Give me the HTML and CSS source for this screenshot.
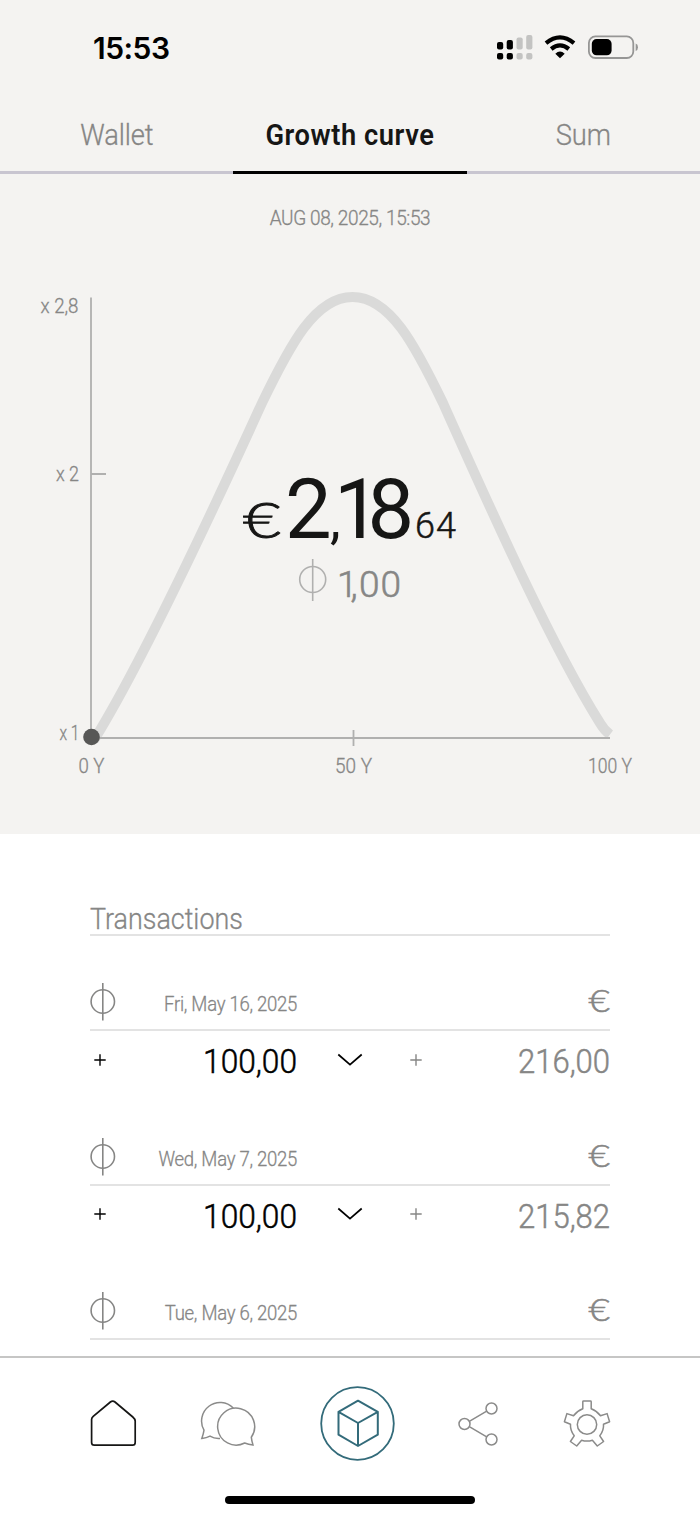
FILE: index.html
```
<!DOCTYPE html>
<html lang="en">
<head>
<meta charset="utf-8">
<title>Growth curve</title>
<link rel="stylesheet" href="styles.css">
</head>
<body>
<svg class="defs" width="0" height="0" aria-hidden="true">
  <symbol id="phi" viewBox="0 0 26 38"><circle cx="12.8" cy="18.5" r="11.7"/><path d="M12.8 0V37.5"/></symbol>
  <symbol id="plus" viewBox="0 0 12 12"><path d="M0.3 6H11.7M6 0.3V11.7"/></symbol>
  <symbol id="chevron" viewBox="0 0 26 14"><path d="M1.3 1.5L13 11.6L24.7 1.5"/></symbol>
</svg>
<div class="app">
  <header class="top">
    <div class="status">
      <span class="time">15:53</span>
      <svg class="status-icons" viewBox="0 0 144 26" width="144" height="26">
        <g fill="#000"><rect x="2" y="7" width="6.200" height="7.500" rx="2"/><rect x="11.700" y="5" width="6.200" height="9.500" rx="2"/><rect x="2" y="18" width="6.200" height="6.500" rx="2"/><rect x="11.700" y="18" width="6.200" height="6.500" rx="2"/></g>
        <g fill="#c3c3c2"><rect x="21.500" y="2.500" width="6.200" height="12" rx="2"/><rect x="31.200" y="0" width="6.200" height="14.500" rx="2"/><rect x="21.500" y="18" width="6.200" height="6.500" rx="2"/><rect x="31.200" y="18" width="6.200" height="6.500" rx="2"/></g>
        <g fill="none" stroke="#000" stroke-width="4.200"><path d="M51 8.100Q65 -3.500 79 8.100"/><path d="M56.200 14Q65 6.800 73.800 14"/></g>
        <path d="M60.300 18.700Q65 14.500 69.700 18.700L65 23.300Z"/>
        <rect x="93.900" y="1.400" width="44.400" height="21.600" rx="6.500" fill="none" stroke="#969695" stroke-width="1.800"/>
        <rect x="96.800" y="4" width="19.800" height="16.300" rx="4.800"/>
        <path d="M140.700 8.500Q143 9.300 143 12.200T140.700 16Z" fill="#969695"/>
      </svg>
    </div>
    <nav class="tabs">
      <a class="tab"><span>Wallet</span></a>
      <a class="tab active"><span>Growth curve</span></a>
      <a class="tab"><span>Sum</span></a>
    </nav>
  </header>
  <section class="growth">
    <div class="stamp">AUG 08, 2025, 15:53</div>
    <svg class="chart" viewBox="0 240 700 594" width="700" height="594">
      <path class="curve" d="M94 740C140 666 210 517 262 403C290 345 315 297 352.500 297C390 297 415 345 443 403C490 508 551 645 600 723Q604 730 610 734.500"/>
      <path class="axis" d="M91 297.500V738H610M91 474H106M353.500 730V746"/>
      <circle cx="91.500" cy="737" r="8.300" fill="#575756"/>
      <g class="labels">
        <text x="40.500" y="312.500" textLength="38" lengthAdjust="spacingAndGlyphs">x 2,8</text>
        <text x="56" y="481" textLength="23" lengthAdjust="spacingAndGlyphs">x 2</text>
        <text x="59.500" y="739.500" textLength="20" lengthAdjust="spacingAndGlyphs">x 1</text>
        <text x="78.500" y="773" textLength="26" lengthAdjust="spacingAndGlyphs">0 Y</text>
        <text x="335" y="773" textLength="37" lengthAdjust="spacingAndGlyphs">50 Y</text>
        <text x="588" y="773" textLength="44" lengthAdjust="spacingAndGlyphs">100 Y</text>
      </g>
      <text class="euro" x="243" y="538" font-size="49" textLength="38" lengthAdjust="spacingAndGlyphs">€</text>
      <text class="amount" y="538"><tspan x="285">2</tspan><tspan class="separator" x="330">,</tspan><tspan x="334 367.500">18</tspan></text>
      <text class="cents" x="415" y="538" textLength="41">64</text>
      <circle class="coin" cx="312.700" cy="579.500" r="13"/><path class="coin" d="M312.700 559V601"/>
      <text class="phi-amount" x="337 350.500 359 380.500" y="596.500">1,00</text>
    </svg>
  </section>
  <main class="transactions">
    <h2><span>Transactions</span></h2>
    <article class="entry">
      <div class="entry-head"><svg class="phi"><use href="#phi"/></svg><time>Fri, May 16, 2025</time><span class="currency">€</span></div>
      <div class="entry-body"><svg class="plus"><use href="#plus"/></svg><span class="units">100,00</span><svg class="chevron"><use href="#chevron"/></svg><svg class="plus muted"><use href="#plus"/></svg><span class="value">216,00</span></div>
    </article>
    <article class="entry">
      <div class="entry-head"><svg class="phi"><use href="#phi"/></svg><time>Wed, May 7, 2025</time><span class="currency">€</span></div>
      <div class="entry-body"><svg class="plus"><use href="#plus"/></svg><span class="units">100,00</span><svg class="chevron"><use href="#chevron"/></svg><svg class="plus muted"><use href="#plus"/></svg><span class="value">215,82</span></div>
    </article>
    <article class="entry">
      <div class="entry-head"><svg class="phi"><use href="#phi"/></svg><time>Tue, May 6, 2025</time><span class="currency">€</span></div>
    </article>
  </main>
  <footer class="dock">
    <div class="dock-icons">
      <svg width="48" height="48" viewBox="0 0 48 48"><path stroke="#161615" stroke-width="1.700" d="M2.600 19.500Q2.600 17.800 4.200 16.400L21.400 2Q23.700 0.200 26 2L43.800 17Q46.200 19.100 46.200 21V42.500Q46.200 45.200 43.500 45.200H5.300Q2.600 45.200 2.600 42.500Z"/></svg>
      <svg width="56" height="48" viewBox="0.500 0 56 48"><g stroke="#8b8b8a" stroke-width="1.500"><path d="M33.800 8.100A18.500 18.500 0 0 0 4.500 30.200Q4 34 2.300 38.500Q7 38 10.500 36.200Q15 39 20.500 38.500"/><path d="M51.800 37.200A18.500 18.500 0 1 0 45.200 43Q49 44.500 53.500 45Q52.200 41 51.800 37.200Z"/></g></svg>
      <svg width="76" height="76" viewBox="-.5 .5 76 76"><g stroke="#336b7a"><circle cx="38" cy="38" r="36.300" stroke-width="1.800"/><path stroke-width="2" stroke-linejoin="round" d="M38.500 15.200L58.300 26.300V49.200L38.500 60.500L19 49.200V26.300ZM19 26.300L38.500 37.500L58.300 26.300M38.500 37.500V60.500"/></g></svg>
      <svg width="42" height="48" viewBox="1 0 42 48"><g stroke="#8b8b8a" stroke-width="1.500"><circle cx="7.500" cy="24" r="5.500"/><circle cx="34.500" cy="8.500" r="5.500"/><circle cx="34.500" cy="39.500" r="5.500"/><path d="M12.300 21.300L29.700 11.200M12.300 26.700L29.700 36.800"/></g></svg>
      <svg width="48" height="50" viewBox="-24 -25 48 50"><g stroke="#8b8b8a" stroke-width="1.500" stroke-linejoin="round"><circle r="9.700" cy=".5"/><path d="M-4.200 -15.200V-22.300Q-4.200 -23 -3.400 -23H3.400Q4.200 -23 4.200 -22.300V-15.200Q10 -13 13.500 -8.200L20.100 -10.400L22.600 -2.300L16.500 0.200Q17 6 12.800 11.800L16.600 17.500L10.300 22L5.400 16.200Q0 18 -5.400 16.200L-10.300 22L-16.600 17.500L-12.800 11.800Q-17 6 -16.500 0.200L-22.600 -2.300L-20.100 -10.400L-13.500 -8.200Q-10 -13 -4.200 -15.200Z"/></g></svg>
    </div>
    <div class="home-bar"></div>
  </footer>
</div>
</body>
</html>
```
FILE: styles.css
```
* { box-sizing: border-box; }
body { margin: 0; background: #fff; font-family: Roboto, "Liberation Sans", sans-serif; font-weight: 300; color: #868685; -webkit-text-stroke: 0.3px currentColor; }
.defs { position: absolute; }
.app { display: flex; flex-direction: column; width: 700px; height: 1517px; overflow: hidden; }
.top { height: 174px; flex: none; background: #f4f3f1; display: flex; flex-direction: column; }
.status { height: 96px; display: flex; justify-content: space-between; padding: 35px 61px 0 93px; }
.time { font: 600 30px/27px Inter, sans-serif; color: #000; letter-spacing: -0.5px; -webkit-text-stroke: 0; }
.status-icons { display: block; }
.tabs { flex: 1; display: grid; grid-template-columns: 1fr 1fr 1fr; font-size: 29px; line-height: 34px; text-align: center; }
.tab { padding-top: 22px; border-bottom: 3px solid #c8c5d0; letter-spacing: -0.1px; }
.tab span { display: inline-block; transform: scaleX(0.94); }
.active { color: #161615; font-weight: 600; border-color: #000; letter-spacing: 0.6px; -webkit-text-stroke: 0; }
.growth { height: 660px; flex: none; background: #f4f3f1; }
.stamp { height: 66px; padding-top: 32px; font-size: 20px; line-height: 24px; text-align: center; letter-spacing: -0.4px; transform: scaleX(0.95); }
.chart { display: block; -webkit-text-stroke: 0; }
.curve { fill: none; stroke: #dadad9; stroke-width: 10; }
.axis { fill: none; stroke: #b0b0af; stroke-width: 1.8; }
.labels { font-size: 20px; fill: #868685; stroke: #868685; stroke-width: 0.3; }
.euro { font-family: Lato, sans-serif; font-weight: 300; fill: #161615; stroke: #161615; stroke-width: 0.9; }
.amount { font-size: 83px; font-weight: 400; fill: #161615; }
.separator { font-size: 54px; }
.cents { font-size: 36px; fill: #161615; stroke: #161615; stroke-width: 0.5; }
.coin { fill: none; stroke: #b0b0af; stroke-width: 1.6; }
.phi-amount { font-size: 37px; fill: #868685; stroke: #868685; stroke-width: 0.6; }
.transactions { flex: 1; min-height: 0; overflow: hidden; padding: 67px 90px 0; }
h2 { margin: 0; height: 35px; border-bottom: 2px solid #e3e3e3; font-size: 29px; font-weight: inherit; line-height: 36px; }
h2 span { display: inline-block; transform: scaleX(0.927); transform-origin: left; }
.entry { height: 154.6px; }
.entry-head { height: 95px; padding-top: 47px; display: grid; grid-template-columns: 26px 181px 1fr; border-bottom: 2px solid #e3e3e3; }
.phi { width: 26px; height: 38px; fill: none; stroke: #868685; stroke-width: 1.6; }
time { font-size: 20px; line-height: 24px; padding-top: 9px; text-align: right; letter-spacing: -0.3px; transform: scaleX(0.927); transform-origin: right; }
.currency { font: 300 31px/34px Lato, sans-serif; text-align: right; transform: scaleX(1.2); transform-origin: right; -webkit-text-stroke: 0.6px; }
.entry-body { height: 57px; display: grid; grid-template-columns: 16px 191px 106px 19px 188px; align-items: center; }
.plus { width: 12px; height: 12px; justify-self: end; fill: none; stroke: #000; stroke-width: 1.4; }
.muted { stroke: #868685; }
.units, .value { font-size: 33px; line-height: 38px; text-align: right; padding-top: 5px; transform: scaleX(0.96); transform-origin: right; -webkit-text-stroke: 0.5px; }
.value { transform: scaleX(0.94); }
.units { color: #000; }
.chevron { width: 26px; height: 14px; justify-self: center; fill: none; stroke: #000; stroke-width: 1.7; }
.dock { height: 161px; flex: none; background: #fff; border-top: 2px solid #c6c6c5; display: flex; flex-direction: column; align-items: center; }
.dock-icons { width: 522px; height: 138px; padding: 2px 0 8px; display: flex; justify-content: space-between; align-items: center; }
.dock-icons svg { fill: none; }
.home-bar { width: 250px; height: 8px; border-radius: 4px; background: #000; }
```
